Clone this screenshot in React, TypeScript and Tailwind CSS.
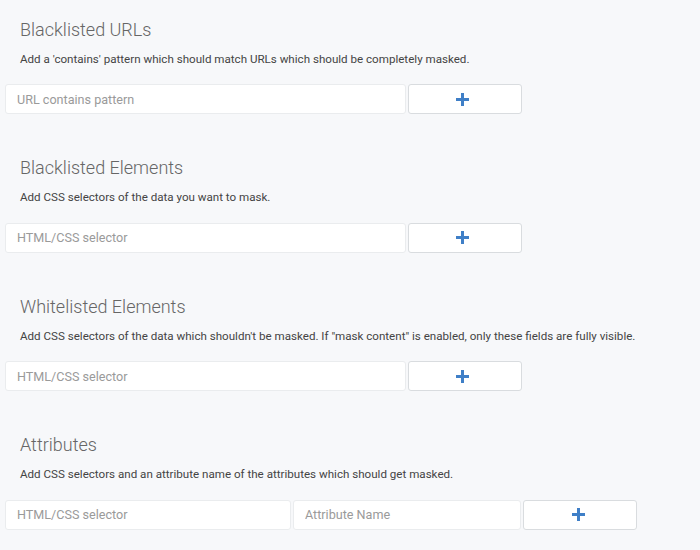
import React from "react";

function Plus() {
  return (
    <svg width="13" height="13" viewBox="0 0 13 13" aria-hidden="true">
      <rect x="0" y="5" width="13" height="3" fill="#3f7fc7" />
      <rect x="5" y="0" width="3" height="13" fill="#3f7fc7" />
    </svg>
  );
}

function AddButton({ width }: { width: string }) {
  return (
    <button
      type="button"
      className={`${width} h-[30px] flex items-center justify-center pr-[4px] bg-white border border-[#d9dcdf] rounded-[3px]`}
    >
      <Plus />
    </button>
  );
}

function Field({ placeholder, width }: { placeholder: string; width: string }) {
  return (
    <input
      type="text"
      placeholder={placeholder}
      className={`${width} h-[30px] bg-white border border-[#eaecee] rounded-[3px] pl-[11px] text-[12.6px] text-[#555] placeholder:text-[#9a9a9a] outline-none`}
    />
  );
}

function Section({
  title,
  desc,
  children,
}: {
  title: string;
  desc: string;
  children: React.ReactNode;
}) {
  return (
    <section className="mb-[41px]">
      <h2 className="pl-[20px] text-[18px] leading-[26px] font-light text-[#666]">{title}</h2>
      <p className="pl-[20px] mt-[7px] text-[11.6px] leading-[18px] text-[#444]">{desc}</p>
      <div className="mt-[16.5px] pl-[5px] flex items-center">{children}</div>
    </section>
  );
}

export default function App() {
  return (
    <div
      className="w-[700px] h-[550px] overflow-hidden bg-[#f7f8fa] pt-[16.5px]"
      style={{ fontFamily: "Roboto, 'Liberation Sans', sans-serif" }}
    >
      <Section
        title="Blacklisted URLs"
        desc="Add a 'contains' pattern which should match URLs which should be completely masked."
      >
        <Field placeholder="URL contains pattern" width="w-[401px]" />
        <div className="w-[1.5px]" />
        <AddButton width="w-[114px]" />
      </Section>
      <Section title="Blacklisted Elements" desc="Add CSS selectors of the data you want to mask.">
        <Field placeholder="HTML/CSS selector" width="w-[401px]" />
        <div className="w-[1.5px]" />
        <AddButton width="w-[114px]" />
      </Section>
      <Section
        title="Whitelisted Elements"
        desc={'Add CSS selectors of the data which shouldn\'t be masked. If "mask content" is enabled, only these fields are fully visible.'}
      >
        <Field placeholder="HTML/CSS selector" width="w-[401px]" />
        <div className="w-[1.5px]" />
        <AddButton width="w-[114px]" />
      </Section>
      <Section
        title="Attributes"
        desc="Add CSS selectors and an attribute name of the attributes which should get masked."
      >
        <Field placeholder="HTML/CSS selector" width="w-[286px]" />
        <div className="w-[2px]" />
        <Field placeholder="Attribute Name" width="w-[228px]" />
        <div className="w-[2px]" />
        <AddButton width="w-[114px]" />
      </Section>
    </div>
  );
}
